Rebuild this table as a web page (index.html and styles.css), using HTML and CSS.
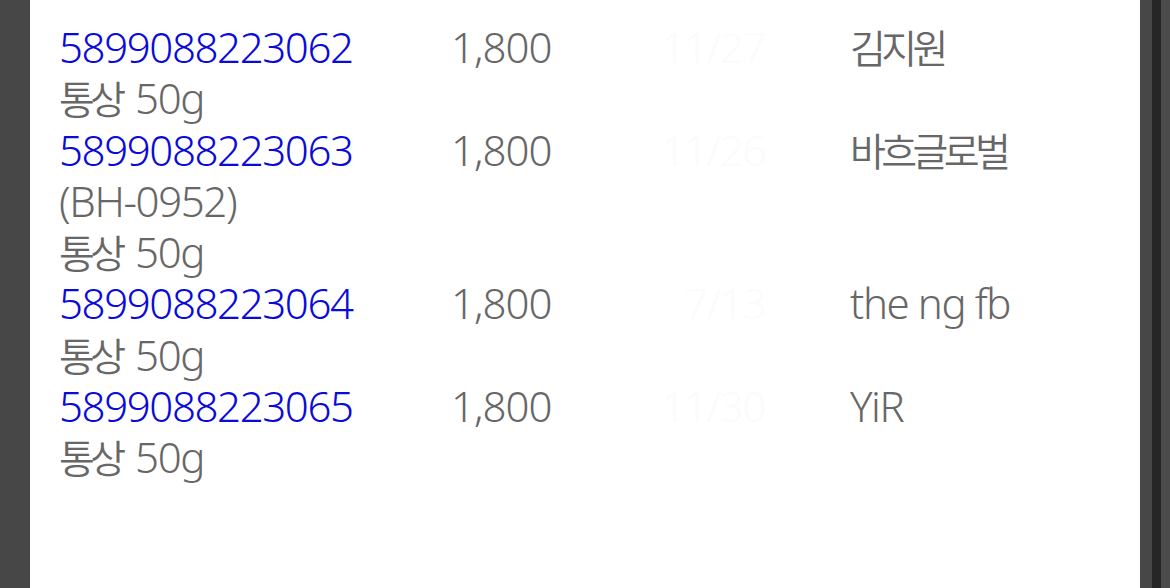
FILE: index.html
```html
<!DOCTYPE html>
<html lang="ko">
<head>
  <meta charset="UTF-8" />
  <meta name="viewport" content="width=device-width, initial-scale=1.0"/>
  <title>주문 목록</title>
  <link rel="stylesheet" href="styles.css">
</head>
<body>
  <div class="frame-left"></div>
  <div class="panel">
    <div class="orders">
      <!-- 상품 한 줄: 바코드 + 이름, 가격, 날짜, 판매자 -->
      <div class="order">
        <div class="item">
          <a class="code" href="#">5899088223062</a>
          <div class="desc"><span class="ko">통상</span> 50g</div>
        </div>
        <div class="price">1,800</div>
        <div class="date">11/27</div>
        <div class="seller"><span class="ko">김지원</span></div>
      </div>
      <div class="order">
        <div class="item">
          <a class="code" href="#">5899088223063</a>
          <div class="desc">(BH-0952)</div>
          <div class="desc"><span class="ko">통상</span> 50g</div>
        </div>
        <div class="price">1,800</div>
        <div class="date">11/26</div>
        <div class="seller"><span class="ko">바흐글로벌</span></div>
      </div>
      <div class="order">
        <div class="item">
          <a class="code" href="#">5899088223064</a>
          <div class="desc"><span class="ko">통상</span> 50g</div>
        </div>
        <div class="price">1,800</div>
        <div class="date">7/13</div>
        <div class="seller">the ng fb</div>
      </div>
      <div class="order">
        <div class="item">
          <a class="code" href="#">5899088223065</a>
          <div class="desc"><span class="ko">통상</span> 50g</div>
        </div>
        <div class="price">1,800</div>
        <div class="date">11/30</div>
        <div class="seller">YiR</div>
      </div>
    </div>
  </div>
  <div class="frame-right"></div>
</body>
</html>
```

FILE: styles.css
```css
html, body {
  height: 100%;
}
body {
  margin: 0;
  display: flex;
  overflow: hidden;
  background-color: #474747;
  font-family: 'Noto Sans', 'Noto Sans CJK KR', sans-serif;
  font-weight: 350;
  font-size: 42px;
  line-height: 51.3px;
  letter-spacing: -1.4px;
  color: #676767;
}
.frame-left { width: 30px; flex: none; }
.frame-right {
  width: 30px;
  flex: none;
  background: linear-gradient(to right, #474747 0 12px, #262626 12px 21px, #4b4b4b 21px);
}
.panel {
  flex: 1;
  background: #ffffff;
  padding: 21px 0 0 29px;
}
.order {
  display: grid;
  grid-template-columns: 392px 197px 117px 1fr;
}
.item .code {
  display: block;
  color: #0a0ad9;
  text-decoration: none;
}
.ko {
  font-size: 39px;
  line-height: 1;
  letter-spacing: -4.6px;
  margin-right: 4px;
}
.price { letter-spacing: -1px; }
.date {
  text-align: right;
  color: #fbfbfb;
}
.seller { padding-left: 85px; }
```
